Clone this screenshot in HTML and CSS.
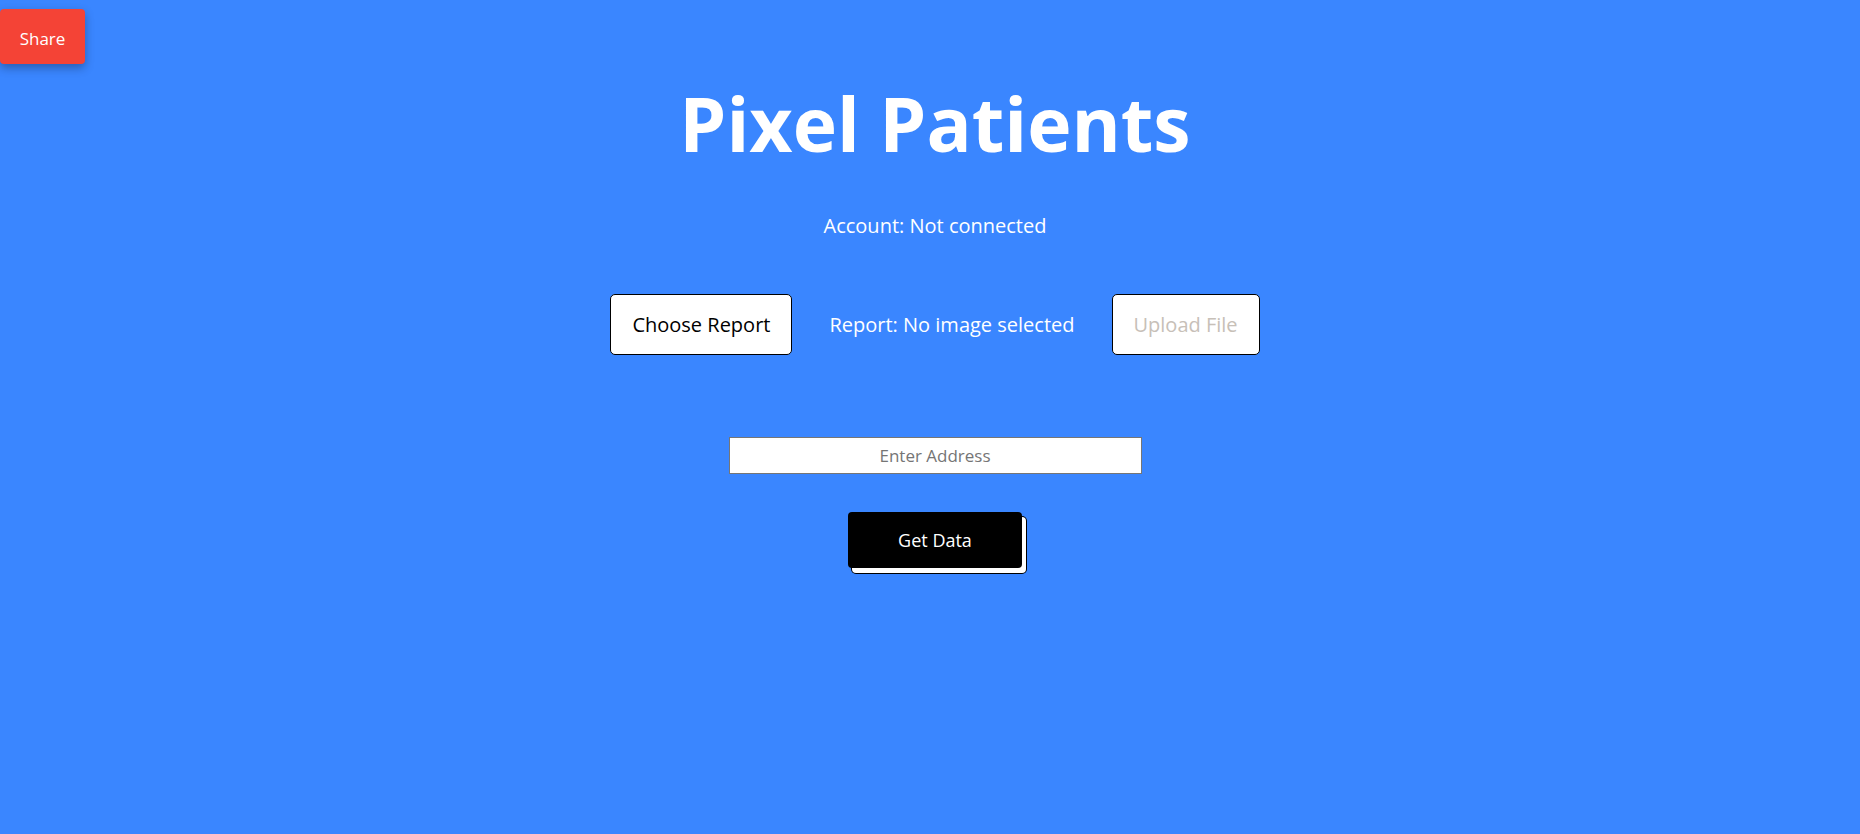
FILE: index.html
```html
<!DOCTYPE html>
<html>
<head>
<meta charset="utf-8">
<link rel="stylesheet" href="styles.css">
</head>
<body>
<button class="share">Share</button>
<main class="app">
  <h1 class="title">Pixel Patients</h1>
  <p class="account">Account: Not connected</p>
  <div class="upload-row">
    <button class="box-btn">Choose Report</button>
    <span class="report">Report: No image selected</span>
    <button class="box-btn disabled" disabled>Upload File</button>
  </div>
  <input class="address" type="text" placeholder="Enter Address">
  <button class="get-data">Get Data</button>
</main>
</body>
</html>
```
FILE: styles.css
```css
html, body {
  margin: 0;
  height: 100%;
}
body {
  background: #3a86ff;
  font-family: "Open Sans", "Liberation Sans", sans-serif;
  color: #fff;
  position: relative;
}
.share {
  position: absolute;
  left: 0;
  top: 9px;
  width: 85px;
  height: 55px;
  padding: 4px 0 0;
  border: none;
  border-radius: 4px;
  background: #f44336;
  color: #fff;
  font-family: inherit;
  font-size: 17px;
  box-shadow: 0 4px 10px rgba(0,0,0,0.3);
}
.app {
  display: flex;
  flex-direction: column;
  align-items: center;
  padding-left: 10px;
}
.title {
  margin: 68px 0 0;
  font-size: 75px;
  font-weight: 700;
  line-height: 110px;
}
.account {
  margin: 34px 0 0;
  font-size: 20px;
  line-height: 28px;
}
.upload-row {
  margin-top: 54px;
  display: flex;
  align-items: center;
  gap: 37px;
}
.box-btn {
  height: 61px;
  padding: 0 21px;
  background: #fff;
  color: #000;
  border: 1px solid #000;
  border-radius: 5px;
  font-family: inherit;
  font-size: 20px;
}
.box-btn.disabled {
  color: #c7c0b8;
}
.report {
  font-size: 20px;
}
.address {
  margin-top: 82px;
  width: 413px;
  height: 37px;
  box-sizing: border-box;
  border: 1px solid #767676;
  text-align: center;
  font-family: inherit;
  font-size: 17px;
}
.address::placeholder {
  color: #757575;
}
.get-data {
  margin-top: 38px;
  width: 174px;
  height: 56px;
  background: #000;
  color: #fff;
  border: none;
  border-radius: 4px;
  font-family: inherit;
  font-size: 18px;
  box-shadow: 4px 5px 0 0 #fff, 4px 5px 0 1px #000;
}
```
